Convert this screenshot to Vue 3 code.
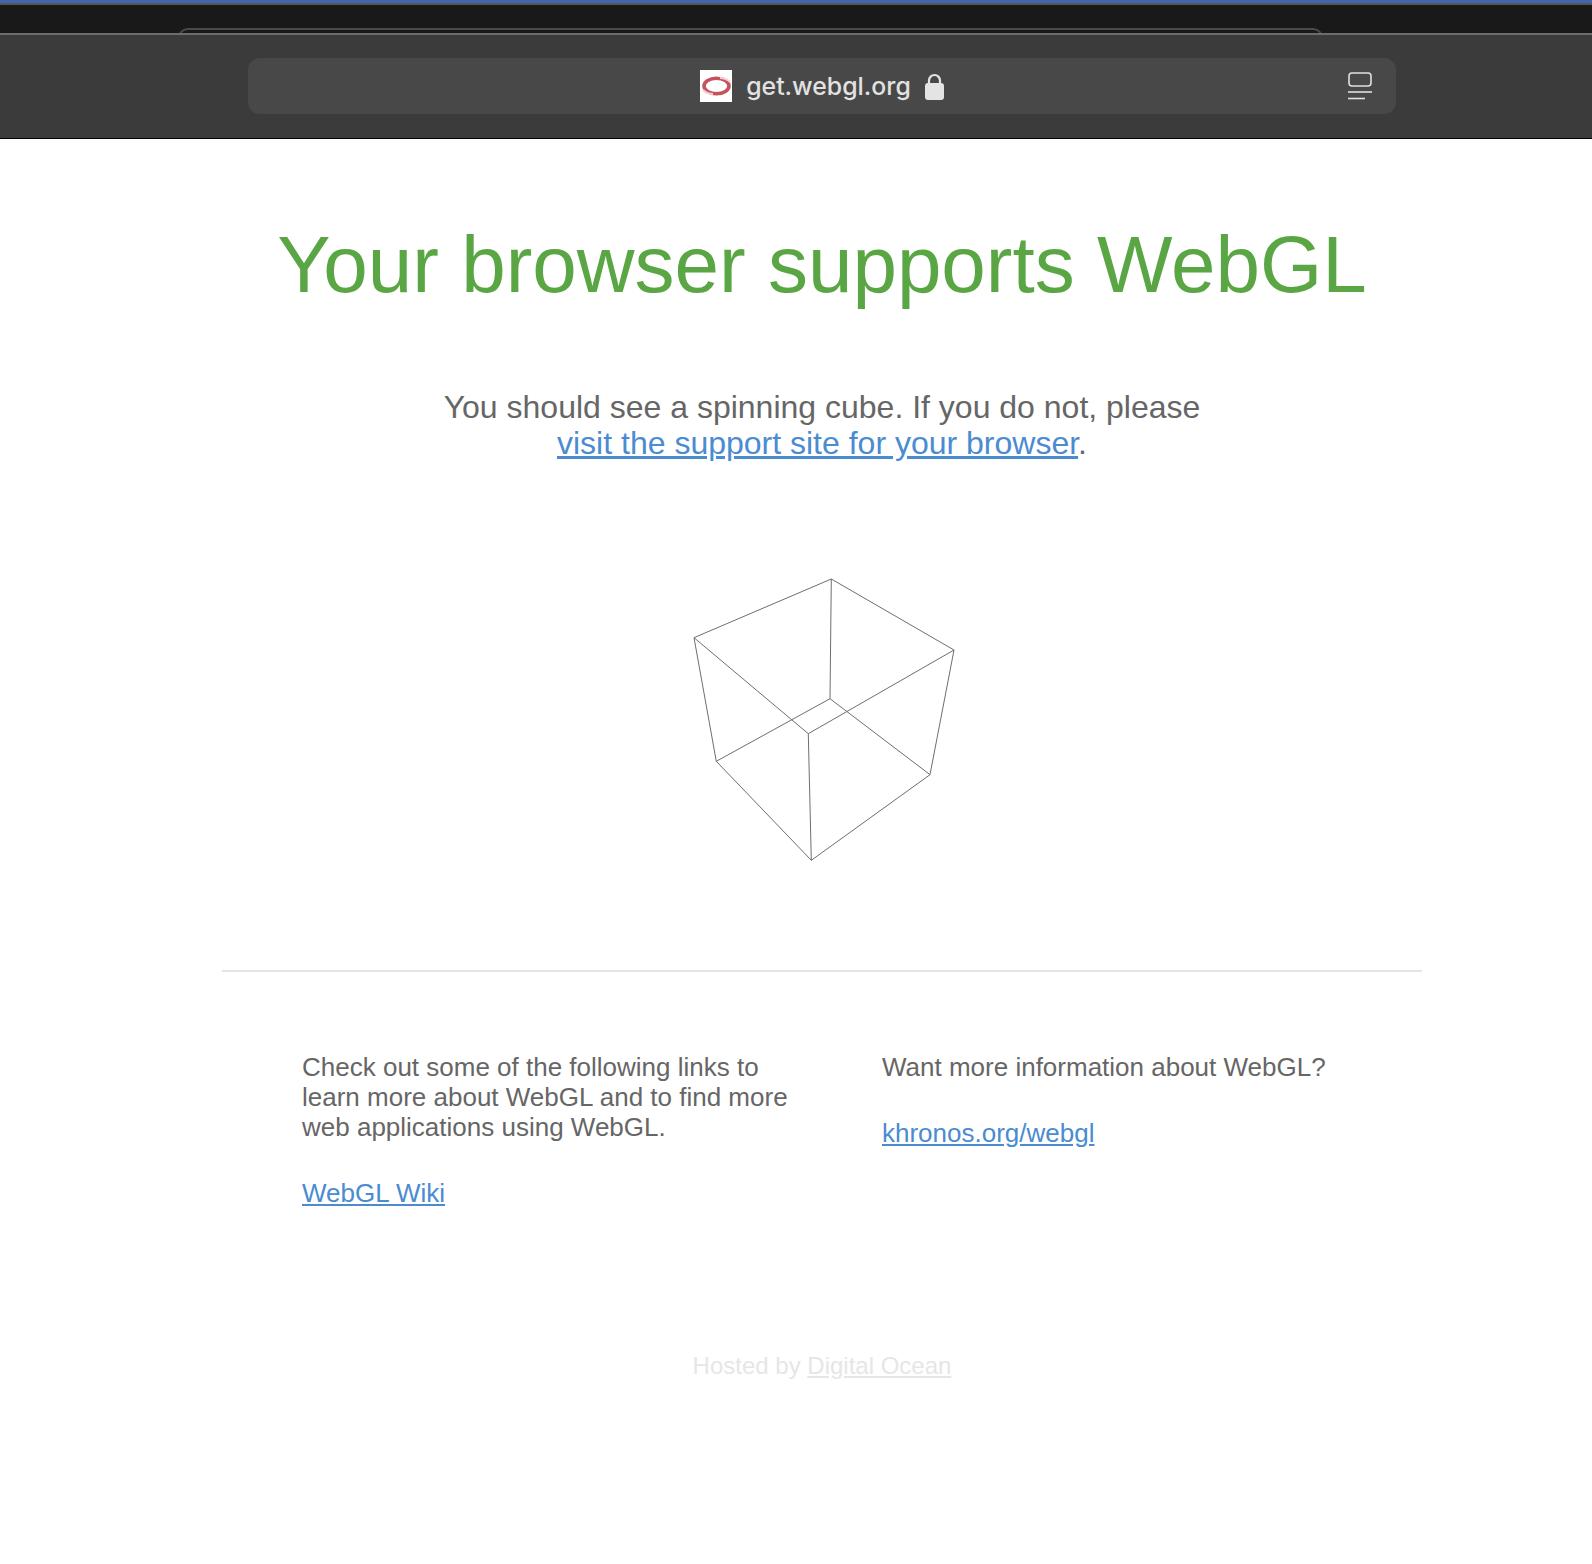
<script setup>
const edges = [
  [831.3, 9, 694, 67.7],
  [831.3, 9, 954, 80],
  [831.3, 9, 830, 128.7],
  [694, 67.7, 716.3, 191.3],
  [694, 67.7, 808.3, 163.7],
  [954, 80, 808.3, 163.7],
  [954, 80, 930, 204.7],
  [830, 128.7, 716.3, 191.3],
  [830, 128.7, 930, 204.7],
  [808.3, 163.7, 811.3, 290.3],
  [716.3, 191.3, 811.3, 290.3],
  [930, 204.7, 811.3, 290.3]
]
</script>

<template>
  <div class="page">
    <div class="tabstrip">
      <div class="tab"></div>
    </div>
    <header class="toolbar">
      <div class="address">
        <div class="site">
          <svg class="favicon" width="32" height="32" viewBox="0 0 32 32">
            <rect width="32" height="32" fill="#fff" />
            <g class="soft">
              <ellipse cx="16.500" cy="16" rx="12.500" ry="7.800" fill="none" stroke="#c4535e" stroke-width="3.600" />
              <path d="M3 20 Q7 24 13 24" fill="none" stroke="#f3cdd1" stroke-width="2" />
              <path d="M30 12 Q26 8 20 8" fill="none" stroke="#f3cdd1" stroke-width="2" />
            </g>
          </svg>
          <span class="domain">get.webgl.org</span>
          <svg class="lock" width="19" height="27" viewBox="0 0 19 27">
            <path d="M4 12V7.500a5.500 5.500 0 0 1 11 0V12" fill="none" stroke="#e4e4e4" stroke-width="2.200" />
            <rect x="0" y="10" width="19" height="17" rx="3" fill="#e4e4e4" />
          </svg>
        </div>
        <svg class="reader" width="24" height="28" viewBox="0 0 24 28">
          <rect x="1" y="1" width="22" height="13" rx="3" fill="none" stroke="#e0e0e0" stroke-width="1.600" />
          <path d="M0 20h24" stroke="#e0e0e0" stroke-width="1.600" />
          <path d="M0 26.500h17" stroke="#e0e0e0" stroke-width="1.600" />
        </svg>
      </div>
    </header>

    <main class="content">
      <h1>Your browser supports WebGL</h1>
      <p class="intro">
        You should see a spinning cube. If you do not, please<br />
        <a href="#">visit the support site for your browser</a>.
      </p>

      <svg class="cube" width="1592" height="300" viewBox="0 0 1592 300">
        <line
          v-for="(e, i) in edges"
          :key="i"
          :x1="e[0]"
          :y1="e[1]"
          :x2="e[2]"
          :y2="e[3]"
          stroke="#6e6e6e"
          stroke-width="1"
        />
      </svg>

      <hr class="rule" />

      <div class="columns">
        <div class="col">
          <p>Check out some of the following links to learn more about WebGL and to find more web applications using WebGL.</p>
          <a href="#">WebGL Wiki</a>
        </div>
        <div class="col">
          <p>Want more information about WebGL?</p>
          <a href="#">khronos.org/webgl</a>
        </div>
      </div>

      <p class="hosted">Hosted by <a href="#">Digital Ocean</a></p>
    </main>
  </div>
</template>

<style scoped>
.page {
  width: 1592px;
  height: 1564px;
  overflow: hidden;
  background: #fff;
  font-family: "Liberation Sans", Arial, sans-serif;
}

.tabstrip {
  height: 30px;
  background: #191919;
  border-top: 3px solid #4464ae;
  position: relative;
  overflow: hidden;
  box-shadow: inset 0 2px 0 #555;
}

.tab {
  position: absolute;
  left: 178px;
  right: 269px;
  top: 25px;
  height: 12px;
  border: 2px solid #4a4a4a;
  border-bottom: 0;
  border-radius: 10px 10px 0 0;
}

.toolbar {
  height: 106px;
  background: #3b3b3b;
  border-top: 2px solid #6d6d6d;
  border-bottom: 1px solid #000;
  padding: 23px 196px 0 248px;
  box-sizing: border-box;
}

.address {
  height: 56px;
  background: #484848;
  border-radius: 12px;
  position: relative;
  display: flex;
  align-items: center;
  justify-content: center;
}

.site {
  display: flex;
  align-items: center;
}

.favicon {
  margin-right: 14px;
}

.soft {
  filter: blur(0.7px);
}

.domain {
  font-family: Inter, "Noto Sans", sans-serif;
  font-size: 24.8px;
  font-weight: 500;
  color: #e2e2e2;
}

.lock {
  margin-left: 14px;
}

.reader {
  position: absolute;
  right: 24px;
  top: 14px;
}

.content {
  text-align: center;
}

h1 {
  margin: 78px 0 0;
  padding-left: 52px;
  font-size: 80px;
  line-height: 96px;
  font-weight: 400;
  color: #5aa645;
}

.intro {
  margin: 76px 0 0;
  padding-left: 52px;
  font-size: 32px;
  line-height: 36px;
  color: #666;
}

a {
  color: #4a8bd1;
}

.cube {
  display: block;
  margin-top: 109px;
}

.rule {
  margin: 100px 170px 0 222px;
  border: 0;
  border-top: 2px solid #e4e4e4;
}

.columns {
  display: flex;
  margin: 80px 0 0 302px;
  text-align: left;
  font-size: 26px;
  line-height: 30px;
  color: #666;
}

.col {
  width: 580px;
}

.col p {
  width: 500px;
  margin: 0 0 36px;
}

.hosted {
  margin: 144px 0 0;
  padding-left: 52px;
  font-size: 24px;
  color: #e6e6e6;
}

.hosted a {
  color: #e6e6e6;
}
</style>
